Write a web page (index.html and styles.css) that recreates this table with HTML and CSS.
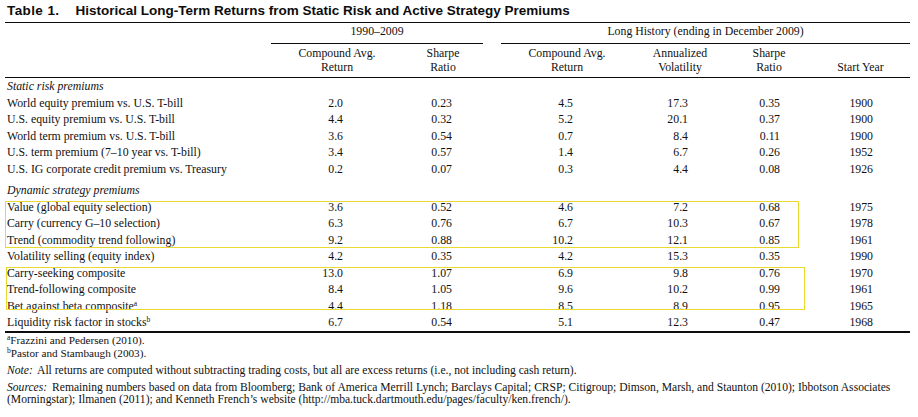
FILE: index.html
```html
<!DOCTYPE html>
<html lang="en">
<head>
<meta charset="utf-8">
<title>Table 1</title>
<link rel="stylesheet" href="styles.css">
</head>
<body>
<div class="page">
  <h1 class="title"><span class="tnum">Table 1.</span>Historical Long-Term Returns from Static Risk and Active Strategy Premiums</h1>
  <div class="tablewrap">
    <table class="data">
      <colgroup>
        <col class="c-label"><col class="c-n1"><col class="c-n2"><col class="c-gap"><col class="c-n3"><col class="c-n4"><col class="c-n5"><col class="c-n6">
      </colgroup>
      <thead>
        <tr class="group-row">
          <th></th>
          <th colspan="2" class="group">1990–2009</th>
          <th></th>
          <th colspan="4" class="group">Long History (ending in December 2009)</th>
        </tr>
        <tr class="head-row">
          <th></th>
          <th>Compound Avg.<br>Return</th>
          <th>Sharpe<br>Ratio</th>
          <th></th>
          <th>Compound Avg.<br>Return</th>
          <th>Annualized<br>Volatility</th>
          <th>Sharpe<br>Ratio</th>
          <th>Start Year</th>
        </tr>
      </thead>
      <tbody>
        <tr class="section"><td colspan="8">Static risk premiums</td></tr>
        <tr><td>World equity premium vs. U.S. T-bill</td><td class="n1">2.0</td><td class="n2">0.23</td><td></td><td class="n3">4.5</td><td class="n4">17.3</td><td class="n5">0.35</td><td class="n6">1900</td></tr>
        <tr><td>U.S. equity premium vs. U.S. T-bill</td><td class="n1">4.4</td><td class="n2">0.32</td><td></td><td class="n3">5.2</td><td class="n4">20.1</td><td class="n5">0.37</td><td class="n6">1900</td></tr>
        <tr><td>World term premium vs. U.S. T-bill</td><td class="n1">3.6</td><td class="n2">0.54</td><td></td><td class="n3">0.7</td><td class="n4">8.4</td><td class="n5">0.11</td><td class="n6">1900</td></tr>
        <tr><td>U.S. term premium (7–10 year vs. T-bill)</td><td class="n1">3.4</td><td class="n2">0.57</td><td></td><td class="n3">1.4</td><td class="n4">6.7</td><td class="n5">0.26</td><td class="n6">1952</td></tr>
        <tr><td>U.S. IG corporate credit premium vs. Treasury</td><td class="n1">0.2</td><td class="n2">0.07</td><td></td><td class="n3">0.3</td><td class="n4">4.4</td><td class="n5">0.08</td><td class="n6">1926</td></tr>
        <tr class="section section-gap"><td colspan="8">Dynamic strategy premiums</td></tr>
        <tr><td>Value (global equity selection)</td><td class="n1">3.6</td><td class="n2">0.52</td><td></td><td class="n3">4.6</td><td class="n4">7.2</td><td class="n5">0.68</td><td class="n6">1975</td></tr>
        <tr><td>Carry (currency G–10 selection)</td><td class="n1">6.3</td><td class="n2">0.76</td><td></td><td class="n3">6.7</td><td class="n4">10.3</td><td class="n5">0.67</td><td class="n6">1978</td></tr>
        <tr><td>Trend (commodity trend following)</td><td class="n1">9.2</td><td class="n2">0.88</td><td></td><td class="n3">10.2</td><td class="n4">12.1</td><td class="n5">0.85</td><td class="n6">1961</td></tr>
        <tr><td>Volatility selling (equity index)</td><td class="n1">4.2</td><td class="n2">0.35</td><td></td><td class="n3">4.2</td><td class="n4">15.3</td><td class="n5">0.35</td><td class="n6">1990</td></tr>
        <tr><td>Carry-seeking composite</td><td class="n1">13.0</td><td class="n2">1.07</td><td></td><td class="n3">6.9</td><td class="n4">9.8</td><td class="n5">0.76</td><td class="n6">1970</td></tr>
        <tr><td>Trend-following composite</td><td class="n1">8.4</td><td class="n2">1.05</td><td></td><td class="n3">9.6</td><td class="n4">10.2</td><td class="n5">0.99</td><td class="n6">1961</td></tr>
        <tr><td>Bet against beta composite<sup>a</sup></td><td class="n1">4.4</td><td class="n2">1.18</td><td></td><td class="n3">8.5</td><td class="n4">8.9</td><td class="n5">0.95</td><td class="n6">1965</td></tr>
        <tr><td>Liquidity risk factor in stocks<sup>b</sup></td><td class="n1">6.7</td><td class="n2">0.54</td><td></td><td class="n3">5.1</td><td class="n4">12.3</td><td class="n5">0.47</td><td class="n6">1968</td></tr>
      </tbody>
    </table>
    <div class="mark mark-1"></div>
    <div class="mark mark-2"></div>
  </div>
  <div class="notes">
    <p class="fn"><sup>a</sup>Frazzini and Pedersen (2010).</p>
    <p class="fn"><sup>b</sup>Pastor and Stambaugh (2003).</p>
    <p class="note"><em>Note:</em> All returns are computed without subtracting trading costs, but all are excess returns (i.e., not including cash return).</p>
    <p class="note sources"><em>Sources:</em> Remaining numbers based on data from Bloomberg; Bank of America Merrill Lynch; Barclays Capital; CRSP; Citigroup; Dimson, Marsh, and Staunton (2010); Ibbotson Associates (Morningstar); Ilmanen (2011); and Kenneth French’s website (http://mba.tuck.dartmouth.edu/pages/faculty/ken.french/).</p>
  </div>
</div>
</body>
</html>
```

FILE: styles.css
```css
* { box-sizing: border-box; }

html, body {
  margin: 0;
  padding: 0;
  background: #ffffff;
}

body {
  color: #111111;
  font-family: "Liberation Serif", "Times New Roman", serif;
  font-size: 11.8px;
}

.page {
  width: 918px;
  padding: 2px 8px 0 5px;
}

.title {
  margin: 0 0 3px 2px;
  font: bold 13.5px/17px "Liberation Sans", Arial, sans-serif;
  color: #0d0d0d;
  white-space: nowrap;
}

.tnum {
  display: inline-block;
  margin-right: 16px;
  letter-spacing: 0.4px;
}

.tablewrap {
  position: relative;
}

.data {
  width: 905px;
  table-layout: fixed;
  border-collapse: separate;
  border-spacing: 0;
  border-top: 1px solid #0d0d0d;
  border-bottom: 2px solid #0d0d0d;
}

.c-label { width: 266px; }
.c-n1 { width: 132px; }
.c-n2 { width: 80px; }
.c-gap { width: 18px; }
.c-n3 { width: 132px; }
.c-n4 { width: 94px; }
.c-n5 { width: 84px; }
.c-n6 { width: 99px; }

.data th {
  font-weight: normal;
  padding: 0;
}

.group-row th {
  line-height: 16px;
  padding: 0 0 4px;
  text-align: center;
}

.group-row th.group {
  border-bottom: 1px solid #0d0d0d;
}

.head-row th {
  line-height: 14px;
  padding: 2px 0 3px;
  text-align: center;
  vertical-align: bottom;
  border-bottom: 1px solid #0d0d0d;
}

.data td {
  padding: 0;
  height: 16.5px;
  line-height: 16.5px;
  white-space: nowrap;
  vertical-align: middle;
}

.data td:first-child {
  padding-left: 2px;
}

.section td {
  font-style: italic;
}

.section-gap td {
  padding-top: 5px;
  height: 21.5px;
}

.n1, .n2, .n3, .n4, .n5, .n6 { text-align: right; }
.n1 { padding-right: 60px !important; }
.n2 { padding-right: 31px !important; }
.n3 { padding-right: 60px !important; }
.n4 { padding-right: 39px !important; }
.n5 { padding-right: 31px !important; }
.n6 { padding-right: 37px !important; }

sup {
  font-size: 7.5px;
  line-height: 0;
  vertical-align: 4px;
}

.mark {
  position: absolute;
  border: 1px solid #e9da30;
  pointer-events: none;
}

.mark-1 {
  top: 179px;
  left: 0;
  width: 794px;
  height: 47px;
}

.mark-2 {
  top: 245px;
  left: 1px;
  width: 799px;
  height: 43px;
}

.notes {
  width: 905px;
  padding: 1px 0 0 2px;
}

.notes p {
  margin: 0;
}

.fn {
  font-size: 11.2px;
  line-height: 13px;
}

.note {
  font-size: 11.6px;
  line-height: 14px;
  margin-top: 4px !important;
}

.note em {
  display: inline-block;
  margin-right: 2px;
}

.sources {
  line-height: 12.5px;
  margin-top: 4px !important;
}
```
